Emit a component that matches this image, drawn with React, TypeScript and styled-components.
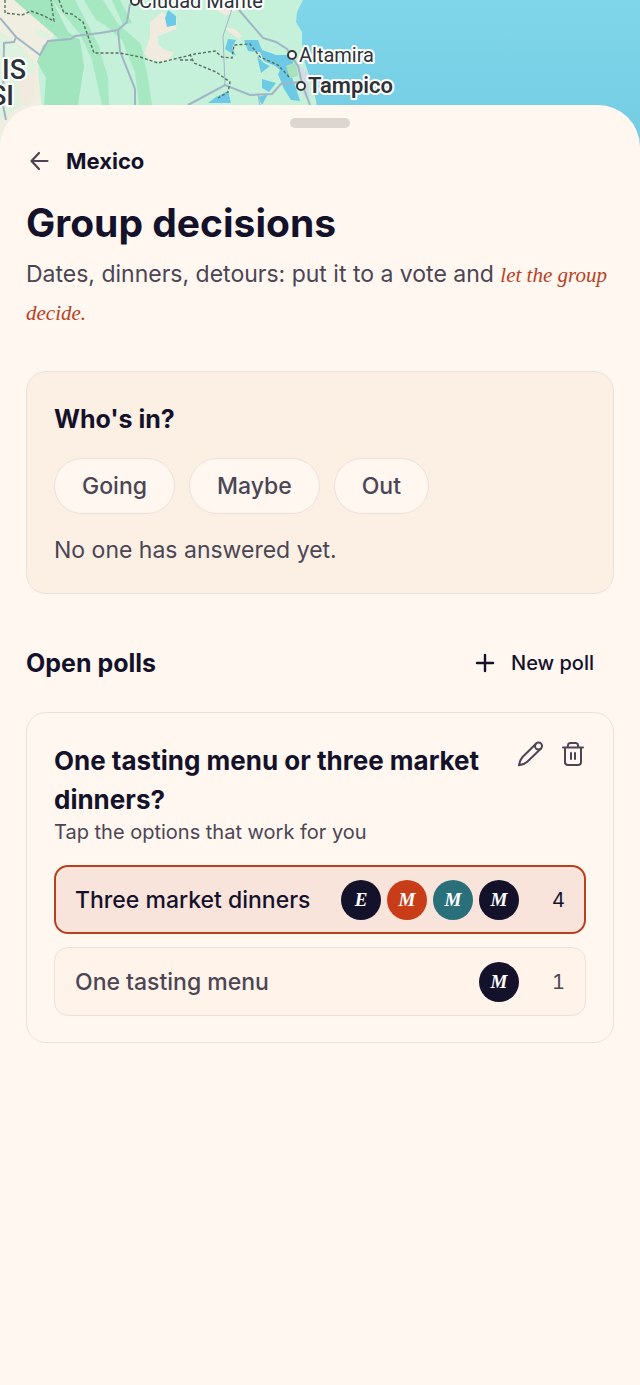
import React from "react";
import styled, { createGlobalStyle } from "styled-components";

const color = {
  paper: "#fff7f0",
  sand: "#fcf0e5",
  ink: "#14122b",
  muted: "#4b4554",
  line: "#ebe1dc",
  accent: "#b9401f",
};

const GlobalStyle = createGlobalStyle`
  *, *::before, *::after { box-sizing: border-box; }
  body {
    margin: 0;
    background: ${color.paper};
    color: ${color.ink};
    font-family: Inter, "Liberation Sans", sans-serif;
    font-size: 23px;
    line-height: 38px;
  }
  h1, h2, h3, p { margin: 0; padding: 0; }
  button { font: inherit; color: inherit; background: none; border: 0; padding: 0; cursor: pointer; }
`;

const MapArea = styled.svg`
  display: block;
  width: 100%;
  height: 150px;
  background: #7ad3e8;
  font-family: Roboto, "Liberation Sans", sans-serif;
`;

const MapLabel = styled.text<{ $weight?: number; $size?: number }>`
  font-size: ${(p) => p.$size ?? 20}px;
  font-weight: ${(p) => p.$weight ?? 400};
  fill: #2d3238;
  stroke: #fff;
  stroke-width: 4px;
  stroke-linejoin: round;
  paint-order: stroke;
`;

const Sheet = styled.main`
  position: relative;
  margin-top: -45px;
  padding: 13px 26px 40px;
  border-radius: 42px 42px 0 0;
  background: ${color.paper};
`;

const Handle = styled.div`
  width: 60px;
  height: 10px;
  margin: 0 auto 18px;
  border-radius: 5px;
  background: #ddd5d0;
`;

const BackLink = styled.a`
  display: flex;
  align-items: center;
  gap: 14px;
  height: 30px;
  color: ${color.ink};
  font-size: 22px;
  font-weight: 700;
  text-decoration: none;
`;

const Title = styled.h1`
  margin-top: 22px;
  font-size: 39px;
  line-height: 50px;
  font-weight: 700;
`;

const Lead = styled.p`
  margin-top: 7px;
  color: ${color.muted};
`;

const Accent = styled.em`
  color: ${color.accent};
  font-family: "Liberation Serif", serif;
  font-size: 21px;
  line-height: 1;
`;

const Card = styled.section<{ $filled?: boolean }>`
  padding: 28px 27px 26px;
  border: 1px solid ${color.line};
  border-radius: 20px;
  background: ${(p) => (p.$filled ? color.sand : "transparent")};
`;

const RsvpCard = styled(Card)`
  margin-top: 40px;
  padding-bottom: 24px;
`;

const Heading = styled.h2`
  font-size: 25px;
  line-height: 38px;
  font-weight: 700;
`;

const Chips = styled.div`
  display: flex;
  flex-wrap: wrap;
  gap: 14px;
  margin: 20px 0 17px;
`;

const Chip = styled.button`
  && {
    height: 56px;
    padding: 0 27px;
    border: 1px solid ${color.line};
    border-radius: 28px;
    background: ${color.paper};
    color: ${color.muted};
    font-weight: 500;
  }
`;

const Muted = styled.p`
  color: ${color.muted};
`;

const SectionBar = styled.div`
  display: flex;
  align-items: center;
  justify-content: space-between;
  margin: 50px 0 30px;
`;

const NewPoll = styled.button`
  && {
    display: flex;
    align-items: center;
    gap: 14px;
    padding-right: 20px;
    font-size: 20px;
    font-weight: 500;
  }
`;

const PollHead = styled.div`
  display: flex;
  align-items: flex-start;
  justify-content: space-between;
  gap: 24px;
`;

const Question = styled.h3`
  font-size: 26px;
  line-height: 39px;
  font-weight: 700;
`;

const Actions = styled.div`
  display: flex;
  gap: 14px;
  color: ${color.muted};
`;

const IconButton = styled.button`
  && { display: flex; height: 28px; }
`;

const Hint = styled.p`
  color: ${color.muted};
  font-size: 20px;
  line-height: 26px;
`;

const Options = styled.div`
  display: grid;
  gap: 13px;
  margin-top: 20px;
`;

const Option = styled.button<{ $picked?: boolean }>`
  && {
    display: flex;
    align-items: center;
    width: 100%;
    height: 69px;
    padding: 0 ${(p) => (p.$picked ? 19 : 20)}px;
    border: ${(p) => (p.$picked ? `2px solid ${color.accent}` : `1px solid ${color.line}`)};
    border-radius: 14px;
    background: ${(p) => (p.$picked ? "#f9e4dc" : "#fff3ea")};
    color: ${(p) => (p.$picked ? color.ink : color.muted)};
    text-align: left;
  }
`;

const OptionName = styled.span`
  flex: 1;
  font-weight: 500;
`;

const Voters = styled.span`
  display: flex;
  gap: 6px;
`;

const Avatar = styled.span<{ $tone: string }>`
  display: grid;
  place-items: center;
  width: 40px;
  height: 40px;
  border-radius: 50%;
  background: ${(p) => p.$tone};
  color: #fff;
  font: italic 700 19px/40px "Liberation Serif", serif;
`;

const Count = styled.span`
  width: 46px;
  font-size: 20px;
  font-variant-numeric: tabular-nums;
  text-align: right;
`;

const polls = [
  {
    name: "Three market dinners",
    picked: true,
    voters: [["E", "#14122b"], ["M", "#c83c18"], ["M", "#2a707b"], ["M", "#14122b"]],
  },
  { name: "One tasting menu", picked: false, voters: [["M", "#14122b"]] },
];

function CoastMap() {
  return (
    <MapArea viewBox="0 0 640 150" preserveAspectRatio="xMinYMin slice" role="img" aria-label="Map of the Gulf coast near Tampico">
      <defs>
        <linearGradient id="sea" x1="0" y1="0" x2="0" y2="1">
          <stop offset="0" stopColor="#7fd6ea" />
          <stop offset="1" stopColor="#73cce3" />
        </linearGradient>
      </defs>
      <rect width="640" height="150" fill="url(#sea)" />
      <path d="M0 0H303L297 12L296 22L302 32V54L308 72L316 100L322 150H0Z" fill="#c5f0d9" />
      <path d="M0 0H45L60 28L42 50L38 70L42 110L0 150Z" fill="#efeee0" />
      <path d="M0 32L20 45L36 66L28 105H22L0 120ZM36 28L50 34L49 40L35 35Z" fill="#dff2df" />
      <path d="M14 0H52L68 32L80 40L84 66L78 105H44L46 78L37 62L43 45L58 38Z" fill="#a1e5bf" />
      <path d="M52 0H75L98 44L108 78L109 105H102L92 60L80 34ZM84 0H103L118 24L141 44L148 78L152 105H139L135 72L122 40L105 25L96 20ZM112 0H120L132 23L123 25Z" fill="#a6e8c2" />
      <path d="M162 12L177 19L176 29L158 36V44L165 50L174 52L168 61L151 61L144 53L150 37V22ZM206 4L220 0H250L238 9L226 16ZM224 27L235 29L242 36L239 39L232 34Z" fill="#f1ebdf" />
      <path d="M18 80L36 70L35 100L20 105Z" fill="#f1ebdf" />
      <path d="M168 10L176 16V25L167 27L165 18ZM228 39L236 40L232 48L236 56L225 49ZM244 40H258L262 50L276 55H287L292 62L286 66L284 73L275 66L264 61L260 52L248 51ZM257 56L264 63L270 66L261 73ZM262 79L276 83L269 92L262 88ZM284 62L294 60L290 72L296 88L300 101L291 100L284 89L278 74ZM216 97L228 91L231 103H208ZM258 97L268 94L262 105Z" fill="#6dcae6" />
      <path d="M286 66L296 62L298 76L290 78Z" fill="#a8e2bc" />
      <path d="M299 66L308 72L309 100L303 95Z" fill="#d2dde5" />
      <g fill="none" stroke="#a0b6c5" strokeWidth="2">
        <path d="M0 18L16 37L40 55L48 41L71 39L75 36L100 33L118 30L127 22L130 4M118 30L120 51L135 89V105M16 37L14 42L4 43L3 105L6 120" />
        <path d="M239 10L263 38L276 42L287 49L298 66L302 84L310 105M188 105L225 85L250 95L272 94L281 84L300 82" />
        <path d="M232 9L223 36L225 85M258 95L260 105" strokeWidth="1" />
      </g>
      <g fill="none" stroke="#59705f" strokeWidth="1.4" strokeDasharray="3 2">
        <path d="M5 0V13L22 15L31 11L42 15L54 21L51 0M59 0L64 13L72 14L83 22L94 53H120L140 57L158 63L195 54L215 51L222 57L232 58L234 45L250 44L260 57L278 65L290 78M190 54L194 63L216 72L230 82L228 92L218 98M180 60H194" />
      </g>
      <MapLabel x="139" y="8">Ciudad Mante</MapLabel>
      <MapLabel x="299" y="62">Altamira</MapLabel>
      <MapLabel x="308" y="93" $weight={600} $size={22}>Tampico</MapLabel>
      <MapLabel x="2" y="79" $weight={500} $size={27}>IS</MapLabel>
      <MapLabel x="-10" y="105" $weight={500} $size={27}>SI</MapLabel>
      <g fill="#fff" stroke="#34383c" strokeWidth="2">
        <circle cx="135" cy="1" r="4" />
        <circle cx="292" cy="55" r="4" />
        <circle cx="301" cy="86" r="4" />
      </g>
    </MapArea>
  );
}

const line = { fill: "none", stroke: "currentColor", strokeLinecap: "round", strokeLinejoin: "round" } as const;

const ArrowIcon = () => (
  <svg width="26" height="26" viewBox="0 0 26 26" strokeWidth="2.2" color={color.muted} aria-hidden {...line}>
    <path d="M21.5 13H5.5M13 5L5.5 13L13 21" />
  </svg>
);

const PlusIcon = () => (
  <svg width="24" height="24" viewBox="0 0 24 24" strokeWidth="2.4" aria-hidden {...line}>
    <path d="M12 4V20M4 12H20" />
  </svg>
);

const PencilIcon = () => (
  <svg width="28" height="28" viewBox="0 0 28 28" strokeWidth="2" aria-hidden {...line}>
    <path d="M20 2.7L6.5 16Q4 19 3 24.3Q8.5 23.3 11.3 20.7L25 7.5" />
    <circle cx="22.5" cy="5" r="3.5" />
  </svg>
);

const TrashIcon = () => (
  <svg width="28" height="28" viewBox="0 0 28 28" strokeWidth="2" aria-hidden {...line}>
    <path d="M5 6.5H25M7 6.5V21Q7 24 10 24H20Q23 24 23 21V6.5M9.5 6.5L10 4Q10.3 2 12.5 2H17.5Q19.7 2 20 4L20.5 6.5M13 12V18M17 12V18" />
  </svg>
);

export default function App() {
  return (
    <>
      <GlobalStyle />
      <CoastMap />
      <Sheet>
        <Handle />
        <BackLink href="#mexico"><ArrowIcon />Mexico</BackLink>
        <Title>Group decisions</Title>
        <Lead>
          Dates, dinners, detours: put it to a vote and <Accent>let the group decide.</Accent>
        </Lead>
        <RsvpCard $filled>
          <Heading>Who's in?</Heading>
          <Chips>
            {["Going", "Maybe", "Out"].map((label) => <Chip key={label}>{label}</Chip>)}
          </Chips>
          <Muted>No one has answered yet.</Muted>
        </RsvpCard>
        <SectionBar>
          <Heading>Open polls</Heading>
          <NewPoll><PlusIcon />New poll</NewPoll>
        </SectionBar>
        <Card>
          <PollHead>
            <Question>One tasting menu or three market dinners?</Question>
            <Actions>
              <IconButton aria-label="Edit poll"><PencilIcon /></IconButton>
              <IconButton aria-label="Delete poll"><TrashIcon /></IconButton>
            </Actions>
          </PollHead>
          <Hint>Tap the options that work for you</Hint>
          <Options>
            {polls.map((o) => (
              <Option key={o.name} $picked={o.picked} aria-pressed={o.picked}>
                <OptionName>{o.name}</OptionName>
                <Voters>
                  {o.voters.map(([initial, tone], i) => <Avatar key={i} $tone={tone}>{initial}</Avatar>)}
                </Voters>
                <Count>{o.voters.length}</Count>
              </Option>
            ))}
          </Options>
        </Card>
      </Sheet>
    </>
  );
}
